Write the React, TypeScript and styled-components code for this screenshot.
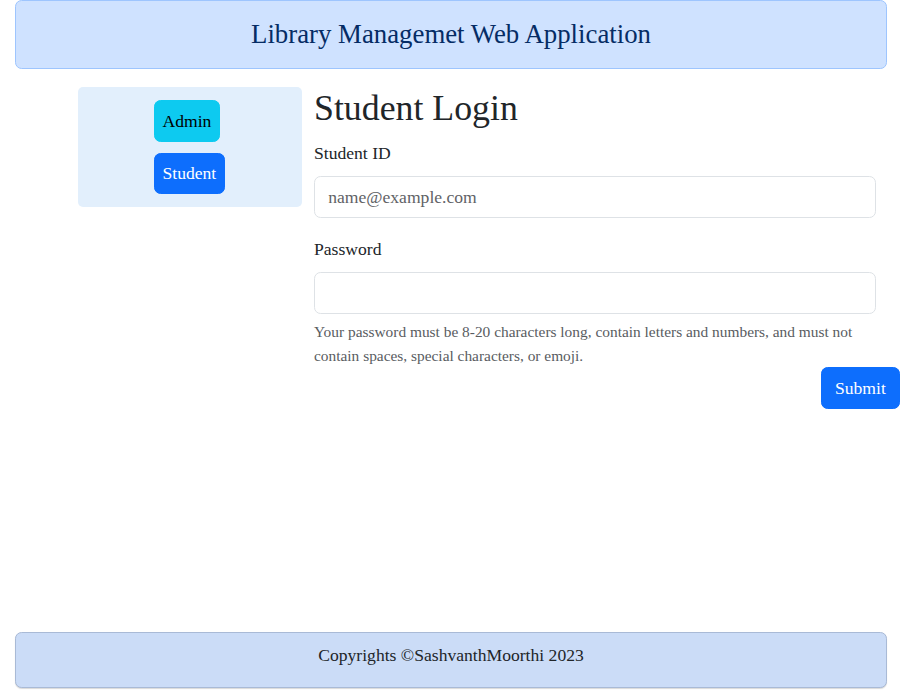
import React from "react";
import styled, { createGlobalStyle } from "styled-components";

const Global = createGlobalStyle`
  html, body { margin: 0; padding: 0; }
  body {
    font-family: "Liberation Serif", "Times New Roman", serif;
    font-size: 17.6px;
    line-height: 1.5;
    color: #212529;
    background: #fff;
  }
  * { box-sizing: border-box; }
`;

const Page = styled.div`
  min-height: 695px;
  display: flex;
  flex-direction: column;
`;

const Header = styled.header`
  margin: 0 20px 0 15px;
  height: 69px;
  background: #cfe2ff;
  border: 1px solid #9ec5fe;
  border-radius: 6.6px;
  display: flex;
  align-items: center;
  justify-content: center;
`;

const HeaderTitle = styled.h3`
  margin: 0;
  font-size: 26.8px;
  font-weight: 400;
  line-height: 1.2;
  color: #052c65;
`;

const Body = styled.div`
  display: flex;
  align-items: flex-start;
  gap: 12px;
  padding: 18px 0 0 78px;
`;

const Sidebar = styled.nav`
  width: 224px;
  background: #e2effc;
  border-radius: 5px;
  padding: 13px 0 13px 76px;
  display: flex;
  flex-direction: column;
  align-items: flex-start;
  gap: 11px;
`;

const NavButton = styled.button<{ $variant: "info" | "primary" }>`
  font-family: inherit;
  font-size: 17.6px;
  line-height: 1.5;
  padding: 6.6px 7.5px;
  border-radius: 6.6px;
  border: 1px solid ${(p) => (p.$variant === "info" ? "#0dcaf0" : "#0d6efd")};
  background: ${(p) => (p.$variant === "info" ? "#0dcaf0" : "#0d6efd")};
  color: ${(p) => (p.$variant === "info" ? "#000" : "#fff")};
  cursor: pointer;
`;

const Main = styled.main`
  width: 586px;
  display: flex;
  flex-direction: column;
`;

const Title = styled.h1`
  margin: 0 0 10.4px;
  font-size: 35.8px;
  font-weight: 400;
  line-height: 1.2;
`;

const Field = styled.div<{ $mb: number }>`
  width: 562px;
  margin-bottom: ${(p) => p.$mb}px;
  display: flex;
  flex-direction: column;
`;

const Label = styled.label`
  margin-bottom: 9.6px;
`;

const Input = styled.input`
  font-family: inherit;
  font-size: 17.6px;
  line-height: 1.5;
  height: 42px;
  padding: 6.6px 13.2px;
  border: 1px solid #dee2e6;
  border-radius: 6.6px;
  color: #212529;
  background: #fff;
  &::placeholder { color: #5f6266; }
`;

const HelpText = styled.div`
  margin-top: 5.6px;
  font-size: 15.4px;
  line-height: 1.56;
  color: #595c5f;
`;

const SubmitRow = styled.div`
  display: flex;
  justify-content: flex-end;
  margin-top: -0.5px;
`;

const Submit = styled.button`
  font-family: inherit;
  font-size: 17.6px;
  line-height: 1.5;
  padding: 6.6px 13.2px;
  border-radius: 6.6px;
  border: 1px solid #0d6efd;
  background: #0d6efd;
  color: #fff;
  cursor: pointer;
`;

const Footer = styled.footer`
  margin: auto 20px 7px 15px;
  height: 56px;
  background: #cbdcf7;
  border: 1px solid #a9bad6;
  border-radius: 6.6px;
  box-shadow: 0 1px 1px rgba(0, 0, 0, 0.15);
  display: flex;
  justify-content: center;
  padding-top: 9px;
  font-size: 17.6px;
`;

export default function App() {
  return (
    <>
      <Global />
      <Page>
        <Header>
          <HeaderTitle>Library Managemet Web Application</HeaderTitle>
        </Header>
        <Body>
          <Sidebar>
            <NavButton $variant="info">Admin</NavButton>
            <NavButton $variant="primary">Student</NavButton>
          </Sidebar>
          <Main>
            <Title>Student Login</Title>
            <Field $mb={17.6}>
              <Label>Student ID</Label>
              <Input type="email" placeholder="name@example.com" />
            </Field>
            <Field $mb={0}>
              <Label>Password</Label>
              <Input type="password" />
              <HelpText>
                Your password must be 8-20 characters long, contain letters and numbers, and must not contain
                spaces, special characters, or emoji.
              </HelpText>
            </Field>
            <SubmitRow>
              <Submit>Submit</Submit>
            </SubmitRow>
          </Main>
        </Body>
        <Footer>Copyrights ©SashvanthMoorthi 2023</Footer>
      </Page>
    </>
  );
}
